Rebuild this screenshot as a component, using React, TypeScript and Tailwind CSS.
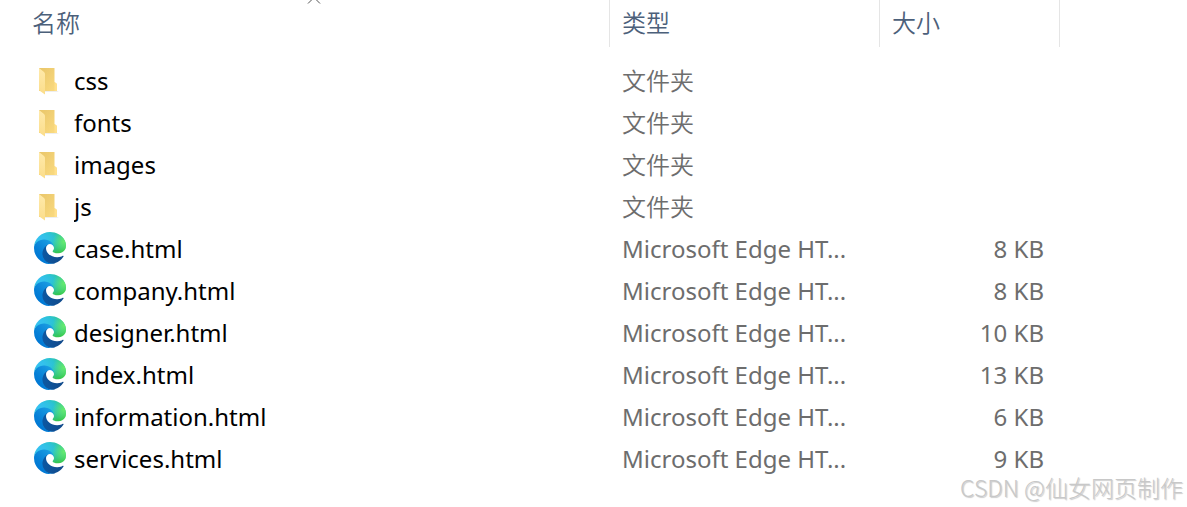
import * as React from "react"
import { clsx } from "clsx"

type FileKind = "folder" | "html"

interface FileEntry {
  name: string
  kind: FileKind
  size?: string
}

const files: FileEntry[] = [
  { name: "css", kind: "folder" },
  { name: "fonts", kind: "folder" },
  { name: "images", kind: "folder" },
  { name: "js", kind: "folder" },
  { name: "case.html", kind: "html", size: "8 KB" },
  { name: "company.html", kind: "html", size: "8 KB" },
  { name: "designer.html", kind: "html", size: "10 KB" },
  { name: "index.html", kind: "html", size: "13 KB" },
  { name: "information.html", kind: "html", size: "6 KB" },
  { name: "services.html", kind: "html", size: "9 KB" },
]

const typeLabels: Record<FileKind, string> = {
  folder: "文件夹",
  html: "Microsoft Edge HT...",
}

function FolderIcon() {
  const id = React.useId()
  return (
    <svg viewBox="0 0 32 32" className="size-8 shrink-0" aria-hidden="true">
      <defs>
        <linearGradient id={`${id}back`} x1="0" y1="0" x2="1" y2="1">
          <stop offset="0" stopColor="#e9c66a" />
          <stop offset="1" stopColor="#fbdb80" />
        </linearGradient>
        <linearGradient id={`${id}front`} x1="0" y1="0" x2="0" y2="1">
          <stop offset="0" stopColor="#ffeaab" />
          <stop offset="1" stopColor="#fbdd8a" />
        </linearGradient>
      </defs>
      <path d="M10 26h13l2 1H11z" fill="#eeeeee" />
      <path d="M5 3h15.500v14l2.500 2v7H5z" fill={`url(#${id}back)`} />
      <path d="M20.500 17l2.500 2v7h-2.500z" fill="#ffe08c" />
      <path d="M5 3l5 4q1 .8 1 2v20.500L6 26q-1-.7-1-2z" fill={`url(#${id}front)`} />
    </svg>
  )
}

function EdgeIcon() {
  const id = React.useId()
  return (
    <svg viewBox="0 0 256 256" className="mb-0.5 size-8 shrink-0" aria-hidden="true">
      <defs>
        <linearGradient id={`${id}a`} x1="58" y1="173" x2="237" y2="173" gradientUnits="userSpaceOnUse">
          <stop offset="0" stopColor="#0c59a4" />
          <stop offset="1" stopColor="#114a8b" />
        </linearGradient>
        <linearGradient id={`${id}b`} x1="153" y1="100" x2="41" y2="221" gradientUnits="userSpaceOnUse">
          <stop offset="0" stopColor="#1b9de2" />
          <stop offset=".16" stopColor="#1595df" />
          <stop offset=".67" stopColor="#0680d7" />
          <stop offset="1" stopColor="#0078d4" />
        </linearGradient>
        <radialGradient
          id={`${id}c`}
          cx="113.370"
          cy="570.210"
          r="202.430"
          gradientTransform="matrix(-.04 1 2.130 .08 -1179.540 -106.690)"
          gradientUnits="userSpaceOnUse"
        >
          <stop offset="0" stopColor="#35c1f1" />
          <stop offset=".11" stopColor="#34c1ed" />
          <stop offset=".23" stopColor="#2fc2df" />
          <stop offset=".31" stopColor="#2bc3d2" />
          <stop offset=".67" stopColor="#36c752" />
        </radialGradient>
        <radialGradient id={`${id}d`} cx="245" cy="82" r="92" gradientUnits="userSpaceOnUse">
          <stop offset="0" stopColor="#66eb6e" />
          <stop offset="1" stopColor="#66eb6e" stopOpacity="0" />
        </radialGradient>
      </defs>
      <g transform="translate(-4.630 -4.920)">
        <path
          d="M235.680 195.460a93.730 93.730 0 01-10.540 4.710 101.870 101.870 0 01-35.900 6.460c-47.320 0-88.540-32.550-88.540-74.320a31.480 31.480 0 0116.430-27.310c-42.800 1.800-53.800 46.400-53.800 72.530 0 73.880 68.090 81.370 82.760 81.370 7.910 0 19.840-2.300 27-4.560l1.310-.44a128.340 128.340 0 0066.600-52.800 4 4 0 00-5.320-5.640z"
          fill={`url(#${id}a)`}
        />
        <path
          d="M110.340 246.340A79.200 79.200 0 0187.600 225a80.720 80.720 0 0129.530-120c3.120-1.470 8.450-4.130 15.540-4a32.350 32.350 0 0125.690 13 31.880 31.880 0 016.360 18.660c0-.21 24.460-79.600-80-79.600-43.900 0-80 41.660-80 78.210a130.150 130.150 0 0012.110 56 128 128 0 00156.380 67.110 75.550 75.550 0 01-62.780-8z"
          fill={`url(#${id}b)`}
        />
        {["c", "d"].map((layer) => (
          <path
            key={layer}
            d="M156.940 153.780c-.81 1.050-3.300 2.500-3.300 5.660 0 2.610 1.700 5.120 4.720 7.230 14.380 10 41.490 8.680 41.560 8.680a59.560 59.560 0 0030.270-8.350 61.380 61.380 0 0030.430-52.880c.26-22.410-8-37.310-11.340-43.910-21.190-41.450-66.930-65.290-116.670-65.290a128 128 0 00-128 126.200c.48-36.540 36.800-66.050 80-66.050 3.500 0 23.460.34 42 10.070 16.340 8.580 24.900 18.940 30.850 29.210 6.180 10.670 7.280 24.150 7.280 29.520s-2.740 13.330-7.800 19.910z"
            fill={`url(#${id}${layer})`}
          />
        ))}
      </g>
    </svg>
  )
}

interface ColumnHeaderProps {
  label: string
  sorted?: boolean
  className?: string
}

function ColumnHeader({ label, sorted, className }: ColumnHeaderProps) {
  return (
    <th scope="col" aria-sort={sorted ? "ascending" : undefined} className="p-0 pb-[13px] font-[350]">
      <button
        type="button"
        className={clsx(
          "relative flex h-[47px] w-full items-center border-r border-[#e5e5e5] pb-px",
          "text-left text-[#4c607a]",
          className
        )}
      >
        {label}
        {sorted && (
          <svg
            viewBox="0 0 14 8"
            className="absolute -top-1 left-[307px] h-2 w-3.5"
            fill="none"
            stroke="#555555"
            aria-hidden="true"
          >
            <path d="M1 7.500l6-6 6 6" />
          </svg>
        )}
      </button>
    </th>
  )
}

function FileRow({ file }: { file: FileEntry }) {
  return (
    <tr className="h-[42px]">
      <td className="p-0 pl-[34px]">
        <div className="flex items-center gap-2 text-black">
          {file.kind === "folder" ? <FolderIcon /> : <EdgeIcon />}
          <span className="truncate">{file.name}</span>
        </div>
      </td>
      <td className={clsx("p-0 pl-3 whitespace-nowrap", file.kind === "folder" && "font-[350]")}>
        {typeLabels[file.kind]}
      </td>
      <td className="p-0 pr-4 text-right">{file.size}</td>
      <td className="p-0" />
    </tr>
  )
}

export default function App() {
  return (
    <main className="relative min-h-screen overflow-hidden bg-white font-['Noto_Sans','Noto_Sans_CJK_SC',sans-serif] text-[24px] leading-8 text-[#6d6d6d]">
      <table className="w-full table-fixed border-separate border-spacing-0">
        <colgroup>
          <col className="w-[610px]" />
          <col className="w-[270px]" />
          <col className="w-[180px]" />
          <col />
        </colgroup>
        <thead>
          <tr>
            <ColumnHeader label="名称" sorted className="pl-8" />
            <ColumnHeader label="类型" className="pl-3" />
            <ColumnHeader label="大小" className="pl-3" />
            <td className="p-0" />
          </tr>
        </thead>
        <tbody>
          {files.map((file) => (
            <FileRow key={file.name} file={file} />
          ))}
        </tbody>
      </table>
      <p className="absolute right-1 bottom-1.5 font-['Noto_Sans_CJK_SC',sans-serif] text-[23px] leading-7 font-light text-[#c8c8c8] [text-shadow:1px_1px_1px_#cccccc]">
        CSDN @仙女网页制作
      </p>
    </main>
  )
}
